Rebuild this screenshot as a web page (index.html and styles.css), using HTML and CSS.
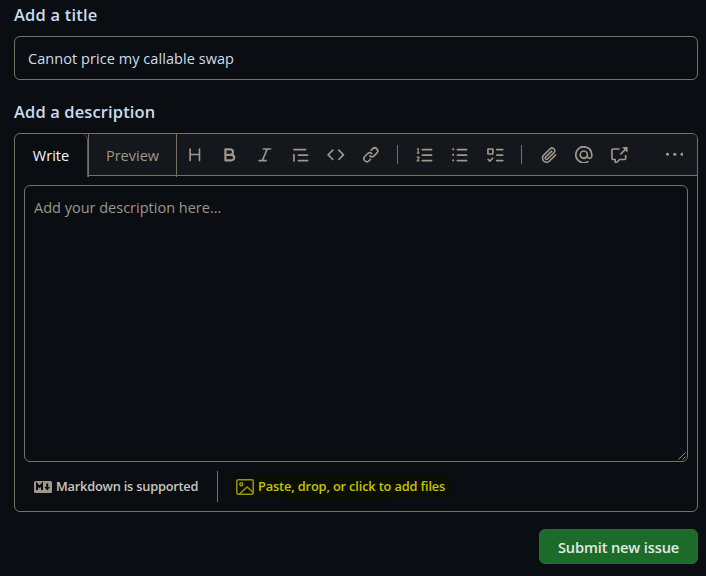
FILE: index.html
```html
<!DOCTYPE html>
<html lang="en">
<head>
<meta charset="utf-8">
<title>New issue</title>
<link rel="stylesheet" href="styles.css">
</head>
<body>
<main class="form">
  <h2 class="label"><span class="t-title">Add a title</span></h2>
  <div class="title-input"><span class="t-input">Cannot price my callable swap</span></div>
  <h2 class="label label-desc"><span class="t-desc">Add a description</span></h2>
  <section class="editor">
    <div class="head">
      <div class="tab tab-write"><span class="t-write">Write</span></div>
      <div class="tab tab-preview"><span class="t-preview">Preview</span></div>
      <div class="toolbar">
        <span class="btn"><svg viewBox="0 0 16 16"><path d="M3.75 2a.75.75 0 0 1 .75.75V7h7V2.75a.75.75 0 0 1 1.5 0v10.5a.75.75 0 0 1-1.5 0V8.5h-7v4.75a.75.75 0 0 1-1.5 0V2.75A.75.75 0 0 1 3.75 2Z"/></svg></span>
        <span class="btn"><svg viewBox="0 0 16 16"><path d="M4 2h4.5a3.501 3.501 0 0 1 2.852 5.53A3.499 3.499 0 0 1 9.5 14H4a1 1 0 0 1-1-1V3a1 1 0 0 1 1-1Zm1 7v3h4.5a1.5 1.5 0 0 0 0-3Zm3.5-2a1.5 1.5 0 0 0 0-3H5v3Z"/></svg></span>
        <span class="btn"><svg viewBox="0 0 16 16"><path d="M6 2.75A.75.75 0 0 1 6.75 2h6.5a.75.75 0 0 1 0 1.5h-2.505l-3.858 9H9.25a.75.75 0 0 1 0 1.5h-6.5a.75.75 0 0 1 0-1.5h2.505l3.858-9H6.75A.75.75 0 0 1 6 2.75Z"/></svg></span>
        <span class="btn"><svg viewBox="0 0 16 16"><path d="M1.75 2.5h10.5a.75.75 0 0 1 0 1.5H1.75a.75.75 0 0 1 0-1.5Zm4 5h8.5a.75.75 0 0 1 0 1.5h-8.5a.75.75 0 0 1 0-1.5Zm0 5h8.5a.75.75 0 0 1 0 1.5h-8.5a.75.75 0 0 1 0-1.5ZM2.5 7.75v6a.75.75 0 0 1-1.5 0v-6a.75.75 0 0 1 1.5 0Z"/></svg></span>
        <span class="btn"><svg viewBox="0 0 16 16"><path d="m11.28 3.22 4.25 4.25a.75.75 0 0 1 0 1.06l-4.25 4.25a.749.749 0 0 1-1.275-.326.749.749 0 0 1 .215-.734L13.94 8l-3.72-3.72a.749.749 0 0 1 .326-1.275.749.749 0 0 1 .734.215Zm-6.56 0a.751.751 0 0 1 1.042.018.751.751 0 0 1 .018 1.042L2.06 8l3.72 3.72a.749.749 0 0 1-.326 1.275.749.749 0 0 1-.734-.215L.47 8.53a.75.75 0 0 1 0-1.06Z"/></svg></span>
        <span class="btn"><svg viewBox="0 0 16 16"><path d="m7.775 3.275 1.25-1.25a3.5 3.5 0 1 1 4.95 4.95l-2.5 2.5a3.5 3.5 0 0 1-4.95 0 .751.751 0 0 1 .018-1.042.751.751 0 0 1 1.042-.018 1.998 1.998 0 0 0 2.83 0l2.5-2.5a2.002 2.002 0 0 0-2.83-2.83l-1.25 1.25a.751.751 0 0 1-1.042-.018.751.751 0 0 1-.018-1.042Zm-4.69 9.64a1.998 1.998 0 0 0 2.83 0l1.25-1.25a.751.751 0 0 1 1.042.018.751.751 0 0 1 .018 1.042l-1.25 1.25a3.5 3.5 0 1 1-4.95-4.95l2.5-2.5a3.5 3.5 0 0 1 4.95 0 .751.751 0 0 1-.018 1.042.751.751 0 0 1-1.042.018 1.998 1.998 0 0 0-2.83 0l-2.5 2.5a1.998 1.998 0 0 0 0 2.83Z"/></svg></span>
        <span class="sep"></span>
        <span class="btn"><svg viewBox="0 0 16 16"><path d="M5.75 2.5h8.5a.75.75 0 0 1 0 1.5h-8.5a.75.75 0 0 1 0-1.5Zm0 5h8.5a.75.75 0 0 1 0 1.5h-8.5a.75.75 0 0 1 0-1.5Zm0 5h8.5a.75.75 0 0 1 0 1.5h-8.5a.75.75 0 0 1 0-1.5Z"/><path class="line" d="M.9 2.9 2 2.4v4.2M.8 6.5h2.4M.9 10.6c.4-1 2-.9 2 .1 0 .9-1.9 1.6-1.9 2.8h2.2"/></svg></span>
        <span class="btn"><svg viewBox="0 0 16 16"><path d="M5.75 2.5h8.5a.75.75 0 0 1 0 1.5h-8.5a.75.75 0 0 1 0-1.5Zm0 5h8.5a.75.75 0 0 1 0 1.5h-8.5a.75.75 0 0 1 0-1.5Zm0 5h8.5a.75.75 0 0 1 0 1.5h-8.5a.75.75 0 0 1 0-1.5ZM2 14a1 1 0 1 1 0-2 1 1 0 0 1 0 2Zm1-6a1 1 0 1 1-2 0 1 1 0 0 1 2 0ZM2 4a1 1 0 1 1 0-2 1 1 0 0 1 0 2Z"/></svg></span>
        <span class="btn"><svg viewBox="0 0 16 16"><path fill-rule="evenodd" d="M2 2h4a1 1 0 0 1 1 1v4a1 1 0 0 1-1 1H2a1 1 0 0 1-1-1V3a1 1 0 0 1 1-1Zm.5 1.5v3h3v-3Zm4.155 7.095a.75.75 0 0 1 0 1.06L4.03 14.28a.75.75 0 0 1-1.06 0l-1.5-1.5a.749.749 0 0 1 .326-1.275.749.749 0 0 1 .734.215l.97.97 2.095-2.095a.75.75 0 0 1 1.06 0ZM9.75 2.5h5.5a.75.75 0 0 1 0 1.5h-5.5a.75.75 0 0 1 0-1.5Zm0 5h5.5a.75.75 0 0 1 0 1.5h-5.5a.75.75 0 0 1 0-1.5Zm0 5h5.5a.75.75 0 0 1 0 1.5h-5.5a.75.75 0 0 1 0-1.5Z"/></svg></span>
        <span class="sep"></span>
        <span class="btn"><svg viewBox="0 0 16 16"><path d="M12.212 3.02a1.753 1.753 0 0 0-2.478.003l-5.83 5.83a3.007 3.007 0 0 0-.88 2.127c0 .795.315 1.551.88 2.116.567.567 1.333.89 2.126.89.79 0 1.548-.321 2.116-.89l5.48-5.48a.75.75 0 0 1 1.061 1.06l-5.48 5.48a4.492 4.492 0 0 1-3.177 1.33c-1.2 0-2.345-.487-3.187-1.33a4.483 4.483 0 0 1-1.32-3.177c0-1.195.475-2.341 1.32-3.186l5.83-5.83a3.25 3.25 0 0 1 5.553 2.297c0 .863-.343 1.691-.953 2.301L7.439 12.39c-.375.377-.884.59-1.416.593a1.998 1.998 0 0 1-1.412-.593 1.992 1.992 0 0 1 0-2.828l5.48-5.48a.751.751 0 0 1 1.042.018.751.751 0 0 1 .018 1.042l-5.48 5.48a.492.492 0 0 0 0 .707.499.499 0 0 0 .352.154.51.51 0 0 0 .356-.154l5.833-5.827a1.755 1.755 0 0 0 0-2.481Z"/></svg></span>
        <span class="btn"><svg viewBox="0 0 16 16"><path d="M4.75 2.37a6.501 6.501 0 0 0 6.5 11.26.75.75 0 0 1 .75 1.298A7.999 7.999 0 0 1 .989 4.148 8 8 0 0 1 16 7.75v1.5a2.75 2.75 0 0 1-5.072 1.475 3.999 3.999 0 0 1-6.65-4.19A4 4 0 0 1 12 7.75v1.5a1.25 1.25 0 0 0 2.5 0V7.867a6.5 6.5 0 0 0-9.75-5.496ZM10.5 7.75a2.5 2.5 0 1 0-5 0 2.5 2.5 0 0 0 5 0Z"/></svg></span>
        <span class="btn"><svg viewBox="0 0 16 16"><path d="M2.75 3.5a.25.25 0 0 0-.25.25v7.5c0 .138.112.25.25.25h2a.75.75 0 0 1 .75.75v2.19l2.72-2.72a.749.749 0 0 1 .53-.22h4.5a.25.25 0 0 0 .25-.25v-2.5a.75.75 0 0 1 1.5 0v2.5A1.75 1.75 0 0 1 13.25 13H9.06l-2.573 2.573A1.458 1.458 0 0 1 4 14.543V13H2.75A1.75 1.75 0 0 1 1 11.25v-7.5C1 2.784 1.784 2 2.75 2h5.5a.75.75 0 0 1 0 1.5ZM16 1.25v4.146a.25.25 0 0 1-.427.177L14.03 4.03l-3.75 3.75a.749.749 0 0 1-1.275-.326.749.749 0 0 1 .215-.734l3.75-3.75-1.543-1.543A.25.25 0 0 1 11.604 1h4.146a.25.25 0 0 1 .25.25Z"/></svg></span>
        <span class="btn more"><svg viewBox="0 0 16 16"><circle cx="1.4" cy="7.5" r="1.45"/><circle cx="8" cy="7.5" r="1.45"/><circle cx="14.6" cy="7.5" r="1.45"/></svg></span>
      </div>
    </div>
    <div class="textarea">
      <span class="t-placeholder">Add your description here...</span>
      <svg class="grip" viewBox="0 0 8 8"><path d="M.5 7.5l7-7M4.5 7.5l3-3"/></svg>
    </div>
    <div class="foot">
      <div class="foot-item markdown">
        <svg class="md" viewBox="0 0 18 12"><rect width="18" height="12" rx="1.5"/><path d="M3 9V3.2L5.5 6 8 3.2V9M13.2 2.5v4"/><path class="arrow" d="M10.4 6h5.6l-2.8 3.6z"/></svg>
        <span class="t-md">Markdown is supported</span>
      </div>
      <div class="foot-item attach">
        <svg class="pic" viewBox="0 0 18 16"><rect x=".8" y=".8" width="16.4" height="14.4" rx="1.5"/><circle cx="5.3" cy="5.3" r="1.5"/><path d="M3.5 15l7.6-7 5.9 5.3"/></svg>
        <span class="t-attach">Paste, drop, or click to add files</span>
      </div>
    </div>
  </section>
  <div class="actions"><button class="submit"><span class="t-submit">Submit new issue</span></button></div>
</main>
</body>
</html>
```
FILE: styles.css
```css
* { box-sizing: border-box; }
body {
  margin: 0;
  height: 576px;
  overflow: hidden;
  background: #0a0d12;
  color: #d5d9dd;
  font: 14.5px/20px "Open Sans", "Noto Sans", sans-serif;
  white-space: nowrap;
}
.form { padding: 4px 8px 0 14px; }
.label { margin: 0; height: 22px; font-size: 16.5px; line-height: 22px; font-weight: 600; color: #c9dced; }
.t-title { letter-spacing: .2px; }
.t-desc { letter-spacing: .12px; }
.title-input {
  display: flex; align-items: center;
  height: 44px; margin-top: 10px; padding: 1px 0 0 13px;
  border: 1px solid #7a7166; border-radius: 6px;
  color: #cfdeeb;
}
.t-input { letter-spacing: .06px; }
.label-desc { margin-top: 21px; }
.editor { height: 379px; margin-top: 10px; border: 1px solid #7a7166; border-radius: 6px; }
.head { display: flex; height: 43px; }
.tab { display: flex; align-items: center; justify-content: center; height: 43px; }
.tab-write { width: 73px; border-right: 1px solid #5f5850; border-radius: 0 6px 0 0; color: #f4f8fc; }
.tab-preview {
  width: 89px;
  border: solid #7a7166; border-width: 0 1px;
  background: linear-gradient(#7a7166, #7a7166) 0 41px / 100% 1px no-repeat, linear-gradient(#14171b, #14171b) 0 0 / 100% 41px no-repeat;
  color: #a0978a;
}
.toolbar {
  display: flex; flex: 1; align-items: center; height: 42px; padding-right: 5px;
  background: #14171b; border-bottom: 1px solid #7a7166; border-radius: 0 5px 0 0;
}
.btn { display: flex; justify-content: center; flex: none; width: 35.3px; }
.btn svg { width: 17.6px; height: 17.6px; fill: #a0968a; }
.btn .line { fill: none; stroke: #a0968a; stroke-width: 1.1; }
.sep { flex: none; width: 1px; height: 19px; margin: 0 9px 0 8.2px; background: #7a7166; }
.more { margin-left: auto; }
.textarea {
  position: relative;
  height: 277px; margin: 8px 9px 0; padding: 12px 9px;
  border: 1px solid #7a7166; border-radius: 6px;
  color: #9f968a;
}
.grip { position: absolute; right: 1px; bottom: 1px; width: 8px; height: 8px; fill: none; stroke: #b5b2ad; stroke-width: .8; }
.foot { display: flex; align-items: center; height: 31px; margin: 9px 9px 0; font-size: 12.8px; font-weight: 600; }
.foot-item { display: flex; align-items: center; height: 31px; }
.foot-item span { padding-bottom: 2px; }
.markdown { width: 194px; padding-left: 10px; gap: 4px; border-right: 1px solid #7a7166; color: #c8c5c0; }
.t-md { letter-spacing: -.22px; }
.t-attach { letter-spacing: -.15px; }
.md { flex: none; width: 18px; height: 12px; fill: #a0968a; }
.md path { fill: none; stroke: #0a0c10; stroke-width: 2; }
.md .arrow { fill: #0a0c10; stroke: none; }
.attach { position: relative; margin-left: 13px; padding: 0 5px; gap: 4px; width: 220px; color: #c3c400; z-index: 0; }
.attach::before, .attach::after { content: ""; position: absolute; z-index: -1; background: #0b0e02; }
.attach::before { left: 0; right: 0; top: 4px; height: 22px; border-radius: 3px; }
.attach::after { left: 30px; right: 40px; top: 4px; height: 27px; border-radius: 50%; }
.pic { flex: none; width: 18px; height: 16px; fill: none; stroke: #97960a; stroke-width: 1.5; }
.actions { display: flex; justify-content: flex-end; margin-top: 17px; }
.submit {
  width: 159px; height: 35px; padding: 0;
  border: 1px solid #23722f; border-radius: 6px; background: #1d6b2a;
  color: #e2e9e3; font: 600 14.6px/20px "Open Sans", "Noto Sans", sans-serif;
}
.t-submit { letter-spacing: -.13px; }
```
